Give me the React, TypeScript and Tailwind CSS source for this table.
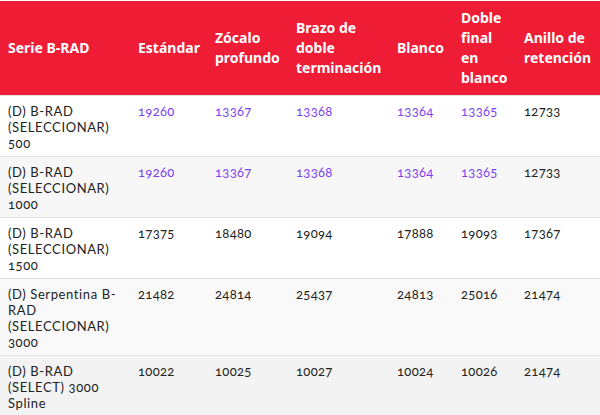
import React from "react";

type Cell = { v: string; link?: boolean };

const headers: string[][] = [
  ["Serie B-RAD"],
  ["Estándar"],
  ["Zócalo", "profundo"],
  ["Brazo de", "doble", "terminación"],
  ["Blanco"],
  ["Doble", "final", "en", "blanco"],
  ["Anillo de", "retención"],
];

const rows: { name: string[]; cells: Cell[]; bg: string }[] = [
  {
    name: ["(D) B-RAD", "(SELECCIONAR)", "500"],
    cells: [
      { v: "19260", link: true },
      { v: "13367", link: true },
      { v: "13368", link: true },
      { v: "13364", link: true },
      { v: "13365", link: true },
      { v: "12733" },
    ],
    bg: "bg-white",
  },
  {
    name: ["(D) B-RAD", "(SELECCIONAR)", "1000"],
    cells: [
      { v: "19260", link: true },
      { v: "13367", link: true },
      { v: "13368", link: true },
      { v: "13364", link: true },
      { v: "13365", link: true },
      { v: "12733" },
    ],
    bg: "bg-[#f7f7f7]",
  },
  {
    name: ["(D) B-RAD", "(SELECCIONAR)", "1500"],
    cells: [
      { v: "17375" },
      { v: "18480" },
      { v: "19094" },
      { v: "17888" },
      { v: "19093" },
      { v: "17367" },
    ],
    bg: "bg-white",
  },
  {
    name: ["(D) Serpentina B-", "RAD", "(SELECCIONAR)", "3000"],
    cells: [
      { v: "21482" },
      { v: "24814" },
      { v: "25437" },
      { v: "24813" },
      { v: "25016" },
      { v: "21474" },
    ],
    bg: "bg-[#f9f9f9]",
  },
  {
    name: ["(D) B-RAD", "(SELECT) 3000", "Spline"],
    cells: [
      { v: "10022" },
      { v: "10025" },
      { v: "10027" },
      { v: "10024" },
      { v: "10026" },
      { v: "21474" },
    ],
    bg: "bg-[#f3f3f3]",
  },
];

const widths = ["w-[130px]", "w-[77px]", "w-[81px]", "w-[101px]", "w-[64px]", "w-[63px]", "w-[84px]"];

// joins lines with <br/> so each cell stays one text block
function Lines({ lines }: { lines: string[] }) {
  return (
    <>
      {lines.map((l, j) => (
        <React.Fragment key={j}>
          {j > 0 && <br />}
          {l}
        </React.Fragment>
      ))}
    </>
  );
}

export default function App() {
  return (
    <div className="w-[600px] h-[415px] overflow-hidden bg-white pt-px font-['Noto_Sans',sans-serif]">
      <table className="w-[600px] table-fixed border-collapse">
        <colgroup>
          {widths.map((w, i) => (
            <col key={i} className={w} />
          ))}
        </colgroup>
        <thead>
          <tr className="bg-[#ef1c36]">
            {headers.map((h, i) => (
              <th
                key={i}
                className="px-2 py-[7px] text-left align-middle text-[14px] leading-[20px] font-bold text-white whitespace-nowrap"
              >
                <Lines lines={h} />
              </th>
            ))}
          </tr>
        </thead>
        <tbody className="font-['Lato',sans-serif]">
          {rows.map((r, i) => (
            <tr key={i} className={`${r.bg} border-t border-[#e2e2e2]`}>
              <td className="px-2 pt-[7px] pb-[5px] align-top text-[13px] leading-[16px] tracking-[0.6px] text-[#222] whitespace-nowrap oldstyle-nums">
                <Lines lines={r.name} />
              </td>
              {r.cells.map((c, j) => (
                <td
                  key={j}
                  className={`px-2 pt-[7px] pb-[5px] align-top text-[13px] leading-[16px] tracking-[0.3px] oldstyle-nums ${
                    c.link ? "text-[#7b3ff2]" : "text-[#222]"
                  }`}
                >
                  {c.v}
                </td>
              ))}
            </tr>
          ))}
        </tbody>
      </table>
    </div>
  );
}
